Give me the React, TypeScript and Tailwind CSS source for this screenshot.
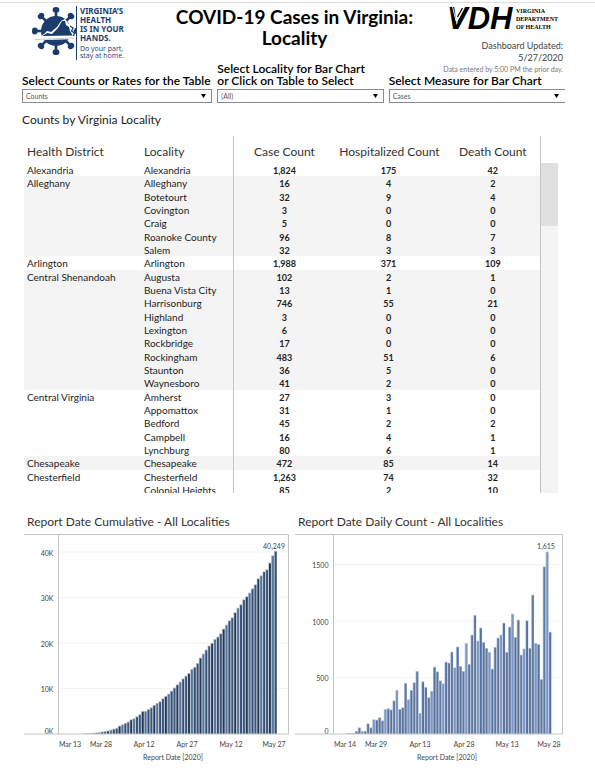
import { useId, useState } from 'react';

type Locality = [name: string, cases: string, hospitalized: string, deaths: string];

interface District {
  name: string;
  shaded: boolean;
  localities: Locality[];
}

const districts: District[] = [
  { name: 'Alexandria', shaded: false, localities: [['Alexandria', '1,824', '175', '42']] },
  {
    name: 'Alleghany',
    shaded: true,
    localities: [
      ['Alleghany', '16', '4', '2'],
      ['Botetourt', '32', '9', '4'],
      ['Covington', '3', '0', '0'],
      ['Craig', '5', '0', '0'],
      ['Roanoke County', '96', '8', '7'],
      ['Salem', '32', '3', '3'],
    ],
  },
  { name: 'Arlington', shaded: false, localities: [['Arlington', '1,988', '371', '109']] },
  {
    name: 'Central Shenandoah',
    shaded: true,
    localities: [
      ['Augusta', '102', '2', '1'],
      ['Buena Vista City', '13', '1', '0'],
      ['Harrisonburg', '746', '55', '21'],
      ['Highland', '3', '0', '0'],
      ['Lexington', '6', '0', '0'],
      ['Rockbridge', '17', '0', '0'],
      ['Rockingham', '483', '51', '6'],
      ['Staunton', '36', '5', '0'],
      ['Waynesboro', '41', '2', '0'],
    ],
  },
  {
    name: 'Central Virginia',
    shaded: false,
    localities: [
      ['Amherst', '27', '3', '0'],
      ['Appomattox', '31', '1', '0'],
      ['Bedford', '45', '2', '2'],
      ['Campbell', '16', '4', '1'],
      ['Lynchburg', '80', '6', '1'],
    ],
  },
  { name: 'Chesapeake', shaded: true, localities: [['Chesapeake', '472', '85', '14']] },
  {
    name: 'Chesterfield',
    shaded: false,
    localities: [
      ['Chesterfield', '1,263', '74', '32'],
      ['Colonial Heights', '85', '2', '10'],
    ],
  },
];

const cumulative = [
  150, 180, 200, 240, 320, 420, 540, 640, 760, 960, 1150, 1320, 1830, 2120, 2420, 2710, 3220, 3440, 3880, 4320, 5050,
  5050, 5490, 5860, 6370, 6810, 7180, 7840, 8350, 8860, 9500, 10200, 10900, 11500, 12200, 12800, 13400, 14290, 14730,
  15600, 16780, 17660, 18540, 19420, 20000, 20880, 21390, 22120, 23150, 24030, 24980, 25640, 26750, 27765, 28500, 29600,
  30260, 31070, 32010, 32890, 34210, 34870, 35750, 36190, 37657, 39270, 40249,
];

const daily = [
  9, 9, 9, 27, 59, 27, 27, 94, 59, 130, 127, 148, 121, 221, 227, 218, 298, 390, 221, 236, 452, 307, 390, 458, 558, 186,
  466, 416, 325, 381, 596, 555, 475, 449, 641, 632, 729, 590, 774, 602, 558, 806, 620, 880, 1054, 827, 942, 815, 762,
  726, 579, 771, 853, 880, 986, 726, 951, 1066, 859, 1013, 703, 756, 1007, 762, 1234, 806, 797, 487, 1485, 1615, 906,
];

function VirusMark() {
  const spikes = [0, 45, 90, 135, 180, 225, 270, 315];
  return (
    <svg width="44" height="50" viewBox="0 0 44 50" aria-hidden="true">
      <g fill="#1b3d6d" stroke="#1b3d6d">
        <circle cx="24" cy="25" r="15" stroke="none" />
        {spikes.map((angle) => (
          <g key={angle} transform={`rotate(${angle} 24 25)`}>
            <path d="M24 14V4" strokeWidth="2.6" />
            <ellipse cx="24" cy="3.8" rx="3.4" ry="2.9" stroke="none" />
          </g>
        ))}
      </g>
      {/* State outline across the lower half */}
      <path d="M4 34L12 28L15 25L19 26L25 21L29 15L33 13L37 18L41 20L43 33Z" fill="#fff" />
      <path d="M9 31L15 27L20 28L26 22L30 15L33 15L34 19L37 21L38 25L41 30Z" fill="#1b3d6d" />
      <path d="M3 34L10 30L42 29.5L41 33Z" fill="#fff" />
      <path d="M3 33.5L42 32" stroke="#7f94b3" strokeWidth="0.5" />
      <path d="M38 20l3 2-1.500 3 3 2-1 3" fill="none" stroke="#1b3d6d" strokeWidth="1.300" />
    </svg>
  );
}

function HealthLogo() {
  return (
    <div className="flex pl-[6px] text-[#1b3d6d]">
      <VirusMark />
      <div className="h-[54px] border-l border-[#1b3d6d] pl-[3px] font-['Noto_Sans',sans-serif]">
        <p className="text-[8px] leading-[9px] font-bold whitespace-nowrap">
          VIRGINIA’S
          <br />
          HEALTH
          <br />
          IS IN YOUR
          <br />
          HANDS.
        </p>
        <p className="pt-[3px] font-['Open_Sans',sans-serif] text-[7px] leading-[7px] whitespace-nowrap">
          Do your part,
          <br />
          stay at home.
        </p>
      </div>
    </div>
  );
}

function VdhLogo() {
  return (
    <div className="flex justify-end pr-[5px] text-black">
      <svg className="overflow-visible" width="66" height="23" viewBox="0 0 66 23" aria-label="VDH">
        <text
          x="-3"
          y="22"
          fontFamily="Liberation Sans, sans-serif"
          fontWeight="700"
          fontStyle="italic"
          fontSize="31"
        >
          VDH
        </text>
        <path d="M2.500 0L6 14M5 0L7.500 11" stroke="#fff" strokeWidth="0.900" />
        <path d="M7.500 10L12.500 1M8 15L16 1" stroke="#000" strokeWidth="1.300" />
      </svg>
      <p className="font-['Liberation_Serif',serif] text-[6px] leading-[8px] font-bold whitespace-nowrap">
        VIRGINIA
        <br />
        DEPARTMENT
        <br />
        OF HEALTH
      </p>
    </div>
  );
}

interface PickerProps {
  label: React.ReactNode;
  options: string[];
  openSides?: boolean;
}

function Picker({ label, options, openSides }: PickerProps) {
  const id = useId();
  const [value, setValue] = useState(options[0]);

  return (
    <div className="flex min-w-0 flex-col justify-end">
      <label htmlFor={id} className="text-[12px] leading-[12px] font-semibold whitespace-nowrap text-black">
        {label}
      </label>
      <div className="relative mt-[2px]">
        <select
          id={id}
          value={value}
          onChange={(e) => setValue(e.target.value)}
          className={`block h-[14px] w-full appearance-none border-[#8a8a8a] bg-white pl-[3px] text-[7px] leading-[12px] text-[#555] ${
            openSides ? 'border-y border-l' : 'border'
          }`}
        >
          {options.map((option) => (
            <option key={option}>{option}</option>
          ))}
        </select>
        <svg className="pointer-events-none absolute top-[5px] right-[6px]" width="5" height="4" viewBox="0 0 5 4">
          <path d="M0 0h5L2.500 4z" fill="#000" />
        </svg>
      </div>
    </div>
  );
}

function LocalityTable() {
  return (
    <div className="flex h-[357px] overflow-hidden">
      <div className="min-w-0 flex-1 border-r border-[#c4c4c4]">
        <table className="w-full table-fixed border-collapse text-[#222]">
          <thead>
            <tr className="h-[27px] text-[12px] leading-[14px] text-[#333]">
              <th className="w-[120px] pt-[4px] pl-[3px] text-left font-normal">Health District</th>
              <th className="w-[89px] border-r border-[#c4c4c4] pt-[4px] text-left font-normal">Locality</th>
              <th className="pt-[4px] font-normal">Case Count</th>
              <th className="pt-[4px] pl-[4px] font-normal whitespace-nowrap">Hospitalized Count</th>
              <th className="pt-[4px] pl-[8px] font-normal whitespace-nowrap">Death Count</th>
            </tr>
          </thead>
          <tbody className="text-[10px] leading-[11px] [&>tr]:h-[13px] [&>tr:nth-child(3n+2)]:h-[14px]">
            {districts.map((district) =>
              district.localities.map(([name, cases, hospitalized, deaths], i) => (
                <tr key={name} className={district.shaded ? 'bg-[#f4f4f4]' : 'bg-white'}>
                  {i === 0 && (
                    <th
                      rowSpan={district.localities.length}
                      scope="rowgroup"
                      className="p-0 pt-[2px] pl-[3px] text-left align-top font-normal whitespace-nowrap"
                    >
                      {district.name}
                    </th>
                  )}
                  <td className="border-r border-[#c4c4c4] p-0 pt-[2px] align-top whitespace-nowrap">{name}</td>
                  <td className="p-0 pt-[2px] text-center align-top text-[9px] font-bold">{cases}</td>
                  <td className="p-0 pt-[2px] pl-[4px] text-center align-top text-[9px] font-bold">{hospitalized}</td>
                  <td className="p-0 pt-[2px] pl-[8px] text-center align-top text-[9px] font-bold">{deaths}</td>
                </tr>
              )),
            )}
          </tbody>
        </table>
      </div>
      {/* Scroll track */}
      <div className="mt-[27px] w-[17px] bg-[#f4f4f4]">
        <div className="h-[63px] bg-[#e0e0e0]" />
      </div>
    </div>
  );
}

interface ChartProps {
  title: string;
  width: number;
  plotLeft: number;
  data: number[];
  lastBarX: number;
  unit: number;
  yTicks: [label: string, value: number][];
  xTicks: [label: string, x: number][];
  peak: [label: string, x: number];
  axisTitleX: number;
  colors: string[];
  edge: string;
}

const BASELINE = 200;
const STEP = 2.89;

function BarChart({
  title,
  width,
  plotLeft,
  data,
  lastBarX,
  unit,
  yTicks,
  xTicks,
  peak,
  axisTitleX,
  colors,
  edge,
}: ChartProps) {
  return (
    <section>
      <h2 className="pl-[3px] text-[12px] leading-[16px] whitespace-nowrap text-[#333]">{title}</h2>
      <svg
        className="mt-[4px] block w-full"
        viewBox={`0 0 ${width} 232`}
        role="img"
        aria-label={title}
        fontSize="7"
        fill="#444"
      >
        {yTicks.map(([label, value]) => {
          const y = BASELINE - value * unit;
          return (
            <g key={label}>
              {value > 0 && <path d={`M${plotLeft} ${y}H${width - 1}`} stroke="#f3f3f3" />}
              <text x={plotLeft - 5} y={value > 0 ? y + 3.5 : y} textAnchor="end">
                {label}
              </text>
            </g>
          );
        })}
        {data.map((value, i) => {
          const x = lastBarX - (data.length - 1 - i) * STEP;
          const height = value * unit;
          return (
            <g key={i}>
              <rect x={x - 1.45} y={BASELINE - height} width={2.9} height={height} fill={edge} />
              <rect
                x={x - 0.75}
                y={BASELINE - height + 0.8}
                width={1.9}
                height={Math.max(height - 0.8, 0)}
                fill={colors[i % colors.length]}
              />
            </g>
          );
        })}
        <path
          d={`M0 0.5H${width - 0.5}V${BASELINE}H0M${plotLeft} 0.5V${BASELINE}`}
          fill="none"
          stroke="#c4c4c4"
        />
        <text x={peak[1]} y="15" textAnchor="middle">
          {peak[0]}
        </text>
        {xTicks.map(([label, x]) => (
          <text key={label} x={x} y="213" textAnchor="middle">
            {label}
          </text>
        ))}
        <text x={axisTitleX} y="226" textAnchor="middle">
          Report Date [2020]
        </text>
      </svg>
    </section>
  );
}

export default function App() {
  return (
    <main className="bg-white pt-[2px] font-['Lato',sans-serif]">
      <div className="border-t border-[#dcdcdc] pt-[3px]">
        {/* Header */}
        <header className="grid h-[69px] grid-cols-[1fr_auto_1fr] items-start pr-[32px] pl-[26px]">
          <HealthLogo />
          <h1 className="text-center text-[19px] leading-[21px] font-bold whitespace-nowrap text-black">
            COVID-19 Cases in Virginia:
            <br />
            Locality
          </h1>
          <div className="pt-px">
            <VdhLogo />
            <p className="pt-[9px] text-right text-[9px] leading-[12px] text-[#444]">
              Dashboard Updated:
              <br />
              5/27/2020
            </p>
            <p className="text-right text-[7px] leading-[10px] whitespace-nowrap text-[#777]">
              Data entered by 5:00 PM the prior day.
            </p>
          </div>
        </header>

        {/* Filters */}
        <div className="-mt-[12px] grid grid-cols-[191fr_167fr_177fr] gap-[5px] pr-[30px] pl-[22px]">
          <Picker label="Select Counts or Rates for the Table" options={['Counts', 'Rates']} />
          <Picker
            label={
              <>
                Select Locality for Bar Chart
                <br />
                or Click on Table to Select
              </>
            }
            options={['(All)', 'Alexandria', 'Alleghany', 'Arlington']}
          />
          <Picker label="Select Measure for Bar Chart" options={['Cases', 'Hospitalizations', 'Deaths']} openSides />
        </div>

        {/* Table */}
        <section className="pr-[37px] pl-[24px]">
          <h2 className="-ml-[2px] pt-[9px] pb-[8px] text-[12px] leading-[16px] text-[#222]">
            Counts by Virginia Locality
          </h2>
          <LocalityTable />
        </section>

        {/* Charts */}
        <div className="grid grid-cols-[265fr_268fr] gap-[6px] pt-[21px] pr-[32px] pl-[24px]">
          <BarChart
            title="Report Date Cumulative - All Localities"
            width={265}
            plotLeft={34.5}
            data={cumulative}
            lastBarX={251.5}
            unit={0.00455}
            yTicks={[
              ['0K', 0],
              ['10K', 10000],
              ['20K', 20000],
              ['30K', 30000],
              ['40K', 40000],
            ]}
            xTicks={[
              ['Mar 13', 46],
              ['Mar 28', 77],
              ['Apr 12', 120],
              ['Apr 27', 163],
              ['May 12', 207],
              ['May 27', 250],
            ]}
            peak={['40,249', 250]}
            axisTitleX={149}
            colors={['#213a5f', '#5d7390', '#2f5180', '#44546c']}
            edge="#b3c0d0"
          />
          <BarChart
            title="Report Date Daily Count - All Localities"
            width={268}
            plotLeft={38.5}
            data={daily}
            lastBarX={255}
            unit={0.1129}
            yTicks={[
              ['0', 0],
              ['500', 500],
              ['1000', 1000],
              ['1500', 1500],
            ]}
            xTicks={[
              ['Mar 14', 50],
              ['Mar 29', 81],
              ['Apr 13', 125],
              ['Apr 28', 169],
              ['May 13', 212],
              ['May 28', 254],
            ]}
            peak={['1,615', 251]}
            axisTitleX={152}
            colors={['#5f7aa6', '#7f97bd', '#4f72a8', '#66758f']}
            edge="#b4c3db"
          />
        </div>
      </div>
    </main>
  );
}
